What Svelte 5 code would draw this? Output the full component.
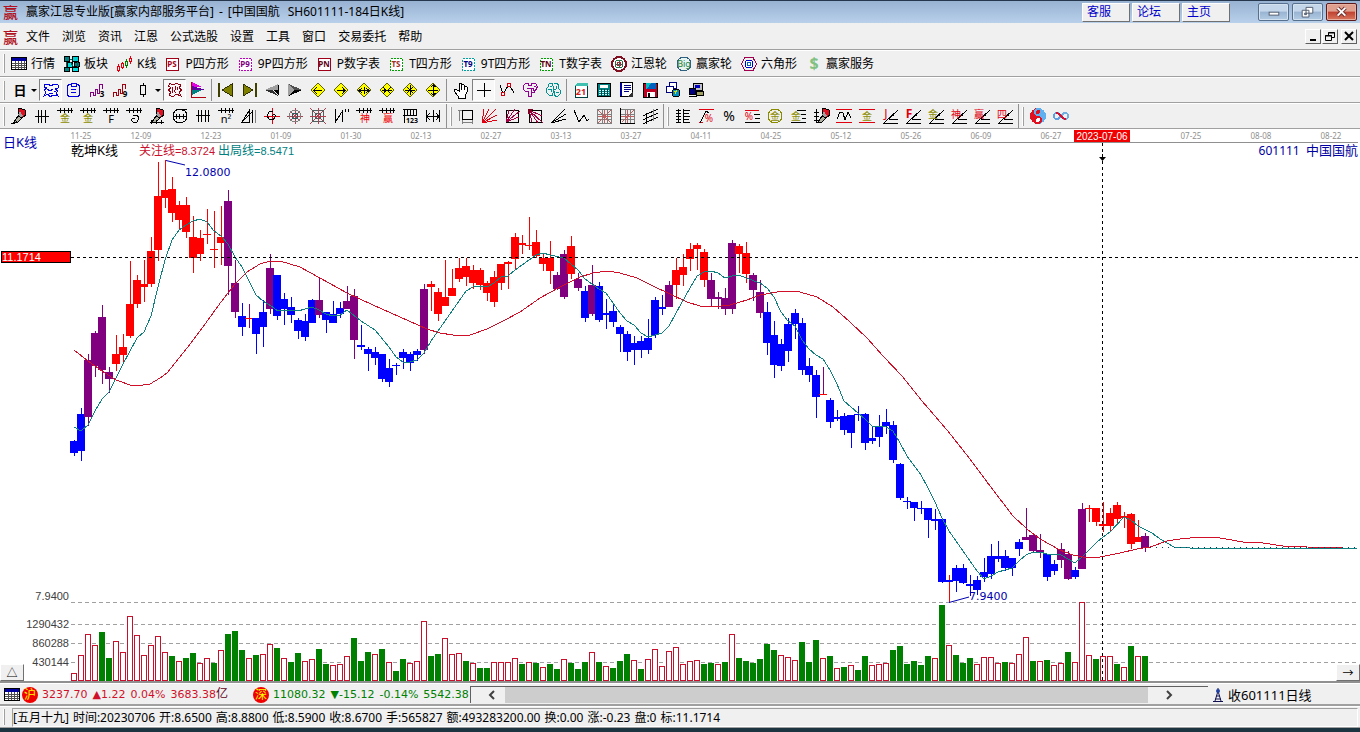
<script lang="ts">
	type Candle = [high: number, top: number, bottom: number, low: number, body: string, wick?: string];
	type Tool = { name: string; art?: string; pressed?: boolean; menu?: boolean; sep?: boolean };

	const RED = '#e00010';
	const GREY = '#808080';
	const OLIVE = '#8c8c00';

	// small helpers for the 18x18 toolbar glyphs
	const line = (d: string, c = '#000', w = 1) =>
		`<path d="${d}" fill="none" stroke="${c}" stroke-width="${w}"/>`;
	const fill = (d: string, c: string, s = 'none') => `<path d="${d}" fill="${c}" stroke="${s}"/>`;
	const word = (s: string, x: number, y: number, size: number, c: string, weight = 400) =>
		`<text x="${x}" y="${y}" font-size="${size}" font-weight="${weight}" fill="${c}" text-anchor="middle">${s}</text>`;
	const ring = (r: number, c: string, w = 1, bg = 'none') =>
		`<circle cx="9" cy="9" r="${r}" fill="${bg}" stroke="${c}" stroke-width="${w}"/>`;

	const comb = line('M1 3.5H17M4.5 1V6M8.5 1V6M12.5 1V6M15.5 1V6');
	const rays = line('M2 16.5H17M8 12.5H17M3 16L17 3M11 8.5H13');
	const fan = line('M2 16L4 2M2 16L9 2M2 16L16 2M2 16L17 8M2 16L17 13', RED);
	const mesh = line('M2.5 2.5H16.5V16.5H2.5ZM7.5 2V17M12.5 2V17M2 7.5H17M2 12.5H17', GREY);
	const pencil =
		fill('M9 1L15 3L16 8L12 11L8 9Z', '#e01020', '#000') +
		fill('M8 9L12 11L8 15L4 15Z', '#b0b0a0', '#000') +
		fill('M10 4L13 9L11 10L8 8Z', '#a0a0a0');
	const badge = (s: string, c: string, ink: string) =>
		`<rect x="2.5" y="3.5" width="12" height="12" fill="#fff" stroke="${c}" stroke-dasharray="${c === '#a00018' ? 'none' : '2 1'}"/>` +
		word(s, 8, 12, 8, ink, 700);
	const diamond = (d: string) =>
		fill('M9 2L16 9L9 16L2 9Z', '#ffff00', '#606000') + line(d, '#000', 1);
	const table =
		'<rect x="1.5" y="2.5" width="15" height="12" fill="#fff" stroke="#000"/><rect x="2" y="3" width="14" height="3" fill="#0000a0"/>' +
		line('M2 8.5H16M2 10.5H16M2 12.5H16M5.5 6V14M8.5 6V14M11.5 6V14M14.5 6V14', '#505050');

	const menus = ['文件', '浏览', '资讯', '江恩', '公式选股', '设置', '工具', '窗口', '交易委托', '帮助'];

	const views: Tool[] = [
		{ name: '行情', art: table },
		{
			name: '板块',
			art:
				'<g stroke="#000"><rect x="1.5" y="1.5" width="5" height="5" fill="#008080"/><rect x="9.5" y="1.5" width="6" height="5" fill="#00d0d0"/><rect x="4.5" y="7.5" width="5" height="5" fill="#00e0e0"/><rect x="11.5" y="7.5" width="5" height="4" fill="#008080"/><rect x="1.5" y="12.5" width="5" height="4" fill="#008080"/><rect x="9.5" y="12.5" width="6" height="4" fill="#00e0e0"/></g>' +
				line('M7 4H9M3.5 7V12M7 7L11 12M14 7V12', '#006060')
		},
		{
			name: 'K线',
			art:
				line('M2.5 9V17M6.5 7V14M14.5 1V9', RED) +
				line('M10.5 4V13', '#008000') +
				'<g fill="#f0f0f0"><rect x="1.5" y="11.5" width="2" height="4" stroke="#e00010"/><rect x="5.5" y="8.5" width="2" height="4" stroke="#e00010"/><rect x="9.5" y="6.5" width="2" height="4" stroke="#008000"/><rect x="13.5" y="3.5" width="2" height="3" stroke="#e00010"/></g>'
		},
		{ name: 'P四方形', art: badge('PS', '#a00018', '#a00018') },
		{ name: '9P四方形', art: badge('P9', '#c000c0', '#800080') },
		{ name: 'P数字表', art: badge('PN', '#a00018', '#600010') },
		{ name: 'T四方形', art: badge('TS', '#00a000', '#a03020') },
		{ name: '9T四方形', art: badge('T9', '#00a0a0', '#000080') },
		{ name: 'T数字表', art: badge('TN', '#00a000', '#600010') },
		{
			name: '江恩轮',
			art: ring(7, '#801020', 2, '#fff') + ring(4, '#207040', 1) + ring(2, '#c02020', 1) + line('M9 5V13M5 9H13', '#555')
		},
		{ name: '赢家轮', art: ring(7, '#306080', 1, '#e8f4f0') + word('Big', 9, 12, 9, '#208040') },
		{
			name: '六角形',
			art: line('M5 2.5H13L16.5 9L13 15.5H5L1.5 9Z', '#a00050', 1) + ring(4, '#0000c0', 1, '#fff') + ring(2, '#0060c0')
		},
		{ name: '赢家服务', art: word('$', 9, 14, 16, '#80c080', 700) }
	];

	const drawBar: Tool[] = [
		{ name: '周期', art: word('日', 10, 14, 13, '#000', 700), menu: true },
		{
			name: '乾坤线',
			pressed: true,
			art: line(
				'M2.5 4L6 3L9 5L12 3L16 4V7L13 8L16 10L14 12L16 15L11 14L8 16L6 13L2 15L4 11L2 9L5 7L2.5 6ZM5 8L8 10L11 8M7 12H11M12 10H14',
				'#0000e0'
			)
		},
		{ name: '剪贴', art: line('M6 3.5H4L2.5 5V14L4 15.5H13L14.5 14V5L13 3.5H11M6 2.5H11V5H6ZM6 8.5H11M6 11.5H11', '#0000e0') },
		{ name: '三线', art: line('M2.5 16V11H5.5V14H7.5V8H9.5V12H11.5V3H14.5V8', '#800080') + word('3', 14, 16, 8, '#000', 700) },
		{ name: '九线', art: line('M2.5 16V11H5.5V14H7.5V8H9.5V12H11.5V3H14.5V8', '#a00010') + word('9', 14, 16, 8, '#000', 700) },
		{ name: 'K线样式', art: line('M6.5 4.5H11.5V13.5H6.5ZM9 2V4M9 14V16'), menu: true },
		{
			name: '形态',
			pressed: true,
			art: line(
				'M4 2.5L7 4L10 2.5L15 4L13 7L16 9L13 11L15 15L10 13L7 16L3 14L5 11L2 9L5 7L2.5 5ZM7 6L6 12M9 5L10 8L8 10L10 12M12 6L11 9',
				'#900010'
			)
		},
		{
			name: '分布',
			art: fill('M3 1L13 6H3Z', '#e000e0') + fill('M3 5L17 9L3 10Z', '#6000a0') + fill('M3 9H13L3 14Z', '#008080') + line('M2.5 1V16.5H17', '#b00010')
		},
		{ name: '', sep: true },
		{ name: '最前', art: line('M2 2V16', '#404000', 2) + fill('M15 3V15L5 9Z', '#808000', '#303000') },
		{ name: '最后', art: line('M16 2V16', '#404000', 2) + fill('M3 3V15L13 9Z', '#808000', '#303000') },
		{ name: '前移', art: fill('M16 3V15L10 9Z', '#000') + fill('M15 3V9H2Z', '#a0a0a0') + fill('M2 9H10L15 15Z', '#303030') },
		{ name: '后移', art: fill('M2 3V15L8 9Z', '#a0a0a0') + fill('M3 3L16 9H8Z', '#505050') + fill('M3 15L8 9H16Z', '#000') },
		{ name: '左', art: diamond('M5 9.5H13M8 6L5 9.5L8 13') },
		{ name: '右', art: diamond('M5 9.5H13M10 6L13 9.5L10 13') },
		{ name: '左右', art: diamond('M4 9.5H14M7 7L4 9.5L7 12M11 7L14 9.5L11 12M9.5 6V13') },
		{ name: '收缩', art: diamond('M4 9.5H14M5 6L8 9.5L5 13M13 6L10 9.5L13 13') },
		{ name: '米字', art: diamond('M4 9.5H14M9.5 4V14M6 6L12 12M12 6L6 12') },
		{ name: '上下', art: diamond('M9.5 3V15M7 6L9 4L12 6M7 12L9 14L12 12M4 9.5H14') },
		{ name: '', sep: true },
		{
			name: '拖动',
			art: fill('M5 9L3 8L2 10L6 15V17H13V15L15 11V6L13 5L12 7V4L10 3L9 7V2H7V10Z', '#fff', '#000') + line('M9.5 4V9M12.5 6V9')
		},
		{ name: '十字', pressed: true, art: line('M9.5 2V16M2 9.5H16') },
		{
			name: '拐点',
			art: line('M2 4L5 13L10 5L12 5L16 12') + '<g fill="#f0f0f0" stroke="#d00010"><circle cx="5" cy="13" r="2"/><circle cx="11" cy="4" r="2"/></g>'
		},
		{
			name: '锦囊',
			art: line('M4.5 2.5H7.5V4.5H10.5V2.5H14.5L16.5 5.5L14.5 9.5H12.5V7.5H10.5V15.5H7.5V10.5H4.5L2.5 8.5V4.5ZM5.5 7.5H9.5M12.5 5.5H14.5M9.5 11.5H13.5V8.5', '#900090')
		},
		{
			name: '大脑',
			art: line('M8 2L5 3L4 6L2 8L3 12L5 14L8 15L9 12V5ZM10 3L13 2L15 5L14 7L16 9V13L13 16L10 14V10M4 8H7V11M12 5V8L10 9M12 11H15M6 5H8', '#009090')
		},
		{ name: '', sep: true },
		{
			name: '日历',
			art: '<rect x="3.5" y="4.5" width="12" height="12" fill="#fff" stroke="#004040"/><path d="M3 5L5 2H16V5Z" fill="#40c0b0"/>' + word('21', 9, 14, 9, '#d02020', 700)
		},
		{
			name: '计算器',
			art: '<rect x="2.5" y="2.5" width="13" height="13" fill="#008080" stroke="#000"/><rect x="5" y="4" width="8" height="3" fill="#fff"/>' + line('M4 9.5H14M4 11.5H14M4 13.5H14', '#c0ffff') + line('M6.5 8V15M9.5 8V15M12.5 8V15', '#004040')
		},
		{
			name: '记事',
			art: '<rect x="2.5" y="1.5" width="12" height="14" fill="#fff" stroke="#000"/>' + line('M3 2V15', '#0000a0', 2) + line('M6 4.5H13M6 6.5H13M6 8.5H13M6 10.5H11', '#000080') + fill('M15 11V16H9Z', '#303030')
		},
		{
			name: '保存',
			art: fill('M2 2H16V16H2Z', '#c00020', '#000') + fill('M5 2H15V8H5Z', '#0060c0') + fill('M5 2H10L6 8H5Z', '#00c0c0') + fill('M6 11H14V16H6Z', '#fff') + fill('M7 12H9V16H7Z', '#000')
		},
		{
			name: '网络',
			art: '<rect x="5.5" y="1.5" width="7" height="6" fill="#fff" stroke="#000080"/><rect x="2.5" y="5.5" width="7" height="6" fill="#fff" stroke="#000080"/><circle cx="12" cy="12" r="4" fill="#0090c0" stroke="#000"/>' + fill('M10 10L13 9L12 14Z', '#e0e000')
		},
		{
			name: '传输',
			art: fill('M6 2H15V9H6Z', '#c0c0c0', '#000') + fill('M8 4H13V7H8Z', '#0000c0') + fill('M2 7H8V13H2Z', '#000080', '#000') + fill('M9 10H16V14H9Z', '#a0a060', '#000') + line('M2 15.5H10')
		}
	];

	const gold = (y: number) => word('金', 9, y, 10, OLIVE);
	const gannBars: Tool[][] = [
		[
			{ name: '画笔', art: pencil + line('M1 16H5L7 14') },
			{ name: '等分', art: line('M2 9.5H16M5.5 3V16M8.5 3V16M12.5 3V16') },
			{ name: '黄金一', art: comb + gold(15) },
			{ name: '黄金二', art: comb + gold(15) },
			{ name: '斐波', art: comb + word('F', 9, 16, 11, '#000') },
			{ name: '螺旋', art: comb + line('M8 8H12L14 11L12 15H8L6 13L8 11H10') },
			{ name: '标尺笔', art: pencil + line('M2 15.5H16M3.5 13V17M8.5 13V17M13.5 13V17') },
			{ name: '圆规', art: ring(7, '#000') + line('M2 9.5H16M5.5 7V12M8.5 7V12M12.5 7V12M11 4L16 2') },
			{ name: '平行', art: line('M2 8.5H16M4.5 3V15M7.5 3V15M11.5 3V15M14.5 3V15') },
			{ name: '平方', art: comb + word('n²', 9, 16, 11, '#000') },
			{ name: '三角尺', art: line('M2 15L9.5 3V15ZM2 15L13 4M12.5 3V16') + line('M15.5 3V16', GREY) },
			{ name: '旋轮', art: line('M9.5 1V17M1 9.5H17', RED) + line('M9 9L11 7L13 9L10 13L6 12L4 9L6 5L10 4') },
			{ name: '蛛网圆', art: line('M9.5 1V17M1 9.5H17M4 4L14 14M14 4L4 14', '#b04050') + ring(3, '#306060') + ring(6, GREY) },
			{ name: '蛛网方', art: line('M1 1L17 17M17 1L1 17', '#b04050') + line('M3.5 3.5H14.5V14.5H3.5ZM6.5 6.5H11.5V11.5H6.5Z', '#506060') + line('M9.5 1V17M1 9.5H17', '#b04050') },
			{ name: '波段', art: line('M3.5 2V15L10.5 4V15M13.5 2V5M16.5 2V5') },
			{ name: '神线', art: comb + word('神', 10, 15, 10, '#f00000') },
			{ name: '赢线', art: comb + word('赢', 10, 15, 10, '#f00000') },
			{ name: '刻度', art: line('M2 2.5H16M2 8.5H16M3.5 2V16M15.5 2V9M6.5 3V8M9.5 3V8M12.5 3V8') + word('123', 11, 16, 7, '#000', 700) },
			{ name: '宽度', art: line('M2.5 3V15M15.5 3V15M9.5 3V15M3 9.5H15M6 6L3 9.5L6 13M12 6L15 9.5L12 13') }
		],
		[
			{ name: '矩形', art: line('M5.5 3.5H15.5V12.5H5.5Z') + line('M1 3.5H5M2.5 3V14M5 15.5H16M5.5 13V17M15.5 13V17', GREY) },
			{ name: '扇形', art: fan },
			{ name: '方扇', art: line('M3.5 3.5H15.5V15.5H3.5Z') + line('M3 15L6 3M3 15L12 2M3 15L17 4M3 15L16 10', '#a00040') },
			{ name: '反扇', art: line('M3.5 3.5H15.5V15.5H3.5Z') + line('M3 3L6 15M3 3L12 16M3 3L17 16M3 3L16 9', '#a00040') + fill('M2 2H7L2 7Z', '#800020') },
			{ name: '射线', art: line('M2 16L16 2M2 16L17 7M2 16L17 12') },
			{ name: '折线', art: line('M2 3L7 15L12 8L15 14L17 12') },
			{ name: '方格', art: mesh + line('M3 3L16 16M16 3L3 16M9.5 3V16M3 9.5H16', '#c06060') },
			{ name: '方格尺', art: mesh + line('M4 15L16 3M9.5 3V16M3 9.5H16', '#c06060') + line('M2.5 1V16.5H17') },
			{ name: '通道', art: line('M2 9L17 2M2 13L17 6M2 17L17 10M5.5 6V17') + line('M12.5 2V14', GREY) }
		],
		[
			{ name: '价格表', art: line('M4.5 2V16M9.5 2V16M2 3.5H7M2 6.5H7M2 9.5H7M2 12.5H7M2 15.5H7M9 3.5H16M9 6.5H15M9 9.5H16M9 12.5H15M9 15.5H16') },
			{ name: '百分比', art: line('M2 2.5H17M2 15.5H6', RED) + line('M3 16L9 4L12 6') + word('%', 12, 15, 10, RED) },
			{ name: '比例', art: word('%', 9, 14, 14, '#000') },
			{ name: '比例线', art: line('M2 3.5H16', RED) + line('M11 7.5H17M12 11.5H17M2 15.5H17') + word('%', 6, 13, 10, RED) },
			{ name: '金圆', art: ring(7, OLIVE) + gold(13) },
			{ name: '金线', art: line('M8 3.5H17M12 7.5H17M13 11.5H17M2 15.5H17') + word('金', 7, 13, 10, OLIVE) },
			{ name: '标注', art: line('M4.5 2V16M2 5.5H7M2 9.5H7M2 13.5H7') + '<g transform="translate(2 0)">' + pencil + '</g>' },
			{ name: '正弦', art: line('M1 2.5H17M1 15.5H17', RED) + line('M2 12L5 5L8 6L10 13L13 5L16 11') },
			{ name: '金轨', art: line('M1 2.5H17M1 15.5H17', RED) + gold(13) },
			{ name: 'J线', art: rays + word('J', 5, 11, 12, RED) },
			{ name: 'F线', art: rays + word('F', 5, 11, 12, RED, 700) },
			{ name: '金角', art: rays + word('金', 6, 11, 10, OLIVE) },
			{ name: '神角', art: rays + word('神', 6, 11, 10, RED) },
			{ name: '赢角', art: rays + word('赢', 6, 11, 10, RED) },
			{ name: '四角', art: rays + word('四', 6, 11, 10, RED) }
		],
		[
			{
				name: '太极',
				art: '<circle cx="9" cy="9" r="8" fill="#60b0f0"/>' + fill('M9 1A8 8 0 0 0 9 17A4 4 0 0 0 9 9A4 4 0 0 1 9 1Z', '#e01020') + '<circle cx="9" cy="5" r="2" fill="#e01020"/><circle cx="9" cy="13" r="2" fill="#fff"/>'
			},
			{
				name: '循环',
				art: line('M9 9C7 5 2 5 2 9S7 13 9 9', '#60a0e0', 2) + line('M9 9C11 5 16 5 16 9S11 13 9 9', '#70b0e0', 2) + line('M4 6C8 5 10 13 14 12', '#d01030', 2)
			}
		]
	];

	const INK: Record<string, string> = { r: '#ff0000', p: '#800080', b: '#0000ff' };

	const candles: Candle[] = [
		[440, 441, 453, 456, 'b'], [408, 414, 451, 461, 'b'], [354, 360, 417, 426, 'p'], [331, 333, 366, 377, 'p'],
		[305, 317, 370, 384, 'p'], [367, 372, 379, 393, 'p'], [335, 354, 364, 371, 'r'], [334, 347, 355, 363, 'r'],
		[261, 304, 336, 338, 'r'], [275, 280, 304, 308, 'r'], [260, 284, 287, 302, 'r'], [237, 251, 284, 287, 'r'],
		[162, 196, 250, 261, 'r'], [160, 190, 198, 208, 'r'], [177, 189, 213, 222, 'r'], [201, 205, 220, 229, 'r'],
		[197, 205, 232, 238, 'r'], [216, 237, 258, 273, 'r'], [230, 238, 254, 261, 'r'], [209, 234, 235, 244, 'r'],
		[211, 249, 250, 268, 'r'], [206, 237, 243, 265, 'r'], [190, 201, 266, 295, 'p'], [260, 283, 312, 318, 'p'],
		[303, 316, 327, 336, 'b'], [304, 318, 319, 328, 'r', 'p'], [318, 318, 334, 354, 'b'], [300, 312, 327, 347, 'b'],
		[254, 268, 309, 314, 'p'], [275, 275, 316, 320, 'b'], [293, 299, 309, 325, 'b'], [297, 307, 315, 323, 'b'],
		[318, 320, 331, 339, 'b'], [314, 321, 337, 341, 'b'], [299, 300, 323, 323, 'b'], [277, 300, 315, 318, 'p'],
		[312, 312, 320, 333, 'b'], [301, 314, 323, 323, 'b'], [302, 308, 314, 318, 'b'], [286, 301, 309, 309, 'p'],
		[289, 296, 340, 359, 'p'], [325, 345, 347, 350, 'b'], [347, 349, 354, 371, 'b'], [347, 352, 358, 365, 'b'],
		[354, 354, 379, 382, 'b'], [359, 368, 382, 387, 'b'], [363, 365, 366, 375, 'b'], [349, 352, 358, 369, 'b'],
		[352, 354, 363, 371, 'b'], [349, 351, 355, 361, 'b'], [284, 289, 350, 354, 'p'], [281, 284, 287, 311, 'r'],
		[288, 292, 314, 321, 'r'], [260, 297, 306, 306, 'r'], [269, 288, 296, 296, 'r'], [258, 268, 279, 282, 'r'],
		[258, 266, 277, 286, 'r'], [265, 270, 283, 289, 'r'], [268, 270, 285, 290, 'r'], [281, 283, 293, 301, 'r'],
		[271, 277, 302, 307, 'r'], [264, 264, 283, 290, 'r'], [261, 262, 264, 289, 'r'], [233, 237, 259, 269, 'r'],
		[235, 243, 245, 254, 'r'], [217, 245, 246, 250, 'r'], [230, 242, 256, 258, 'r'], [253, 258, 264, 271, 'r'],
		[241, 258, 271, 284, 'r'], [272, 275, 289, 290, 'p'], [250, 254, 297, 299, 'p'], [236, 246, 274, 279, 'r'],
		[273, 279, 288, 291, 'p'], [286, 291, 318, 322, 'b'], [265, 285, 314, 316, 'p'], [282, 286, 320, 322, 'b'],
		[299, 313, 315, 329, 'b'], [303, 311, 322, 327, 'b'], [325, 327, 334, 352, 'b'], [331, 334, 352, 361, 'b'],
		[336, 343, 350, 365, 'b'], [336, 341, 350, 358, 'b'], [319, 338, 350, 354, 'b'], [297, 300, 335, 338, 'b'],
		[295, 307, 309, 315, 'b'], [281, 285, 307, 307, 'p'], [258, 270, 285, 299, 'r'], [254, 267, 275, 286, 'r'],
		[243, 249, 259, 271, 'r'], [243, 245, 249, 270, 'r'], [249, 252, 280, 287, 'r'], [273, 280, 299, 307, 'p'],
		[292, 297, 299, 309, 'p'], [288, 298, 309, 315, 'p'], [240, 243, 309, 314, 'p'], [244, 246, 254, 273, 'r'],
		[242, 253, 274, 283, 'r'], [273, 275, 290, 301, 'p'], [280, 292, 313, 318, 'p'], [302, 312, 343, 355, 'b'],
		[321, 335, 365, 378, 'b'], [339, 344, 366, 371, 'b'], [318, 324, 351, 362, 'b'], [309, 313, 324, 339, 'b'],
		[318, 323, 370, 375, 'b'], [358, 366, 375, 382, 'b'], [370, 375, 397, 418, 'b'], [367, 394, 395, 395, 'r', 'p'],
		[398, 400, 422, 428, 'b'], [410, 417, 419, 421, 'b'], [413, 416, 430, 435, 'b'], [415, 415, 433, 448, 'b'],
		[406, 414, 415, 421, 'b'], [413, 414, 443, 450, 'b'], [426, 438, 441, 444, 'b'], [415, 427, 437, 447, 'b'],
		[409, 422, 426, 434, 'b'], [421, 425, 460, 463, 'b'], [463, 464, 498, 500, 'b'], [497, 501, 502, 509, 'b'],
		[502, 502, 508, 521, 'b'], [501, 508, 509, 514, 'b'], [508, 508, 520, 538, 'b'], [509, 519, 521, 530, 'b'],
		[519, 519, 582, 583, 'b'], [575, 580, 582, 602, 'b', 'r'], [565, 568, 581, 592, 'b'], [564, 568, 583, 584, 'b'],
		[575, 584, 586, 596, 'b'], [576, 580, 590, 595, 'b'], [558, 572, 577, 582, 'b'], [544, 556, 574, 579, 'b'],
		[541, 556, 559, 562, 'b'], [550, 556, 568, 571, 'b'], [558, 558, 568, 576, 'b'], [539, 542, 549, 556, 'b'],
		[508, 537, 540, 540, 'p'], [533, 535, 551, 553, 'p'], [534, 550, 553, 558, 'p'], [554, 554, 577, 581, 'b'],
		[560, 564, 571, 575, 'b'], [543, 549, 560, 568, 'p'], [551, 554, 579, 580, 'p'], [567, 570, 577, 579, 'b'],
		[503, 509, 569, 569, 'p'], [505, 508, 509, 522, 'r'], [508, 508, 522, 526, 'r'], [502, 524, 526, 532, 'r'],
		[508, 513, 526, 532, 'r'], [502, 505, 519, 523, 'r'], [512, 516, 518, 528, 'r'], [513, 514, 544, 549, 'r'],
		[520, 537, 542, 542, 'r'], [533, 536, 548, 552, 'p']
	];

	// r = rising (hollow), g = falling (solid), number = top of the bar
	const volumes = (
		'r673 r655 r634 r645 g632 g658 r641 r652 r616 r635 r655 r645 r636 r652 g656 r661 g658 g653 r663 r658 ' +
		'g663 r650 g634 g631 g650 r658 g655 r654 r644 g648 r658 g662 g653 r661 r659 g649 g664 r665 r664 r656 ' +
		'g638 g661 g652 r654 g649 r662 g671 g659 r663 r661 r621 g656 g654 r638 r654 r653 g661 r663 g668 g668 ' +
		'r662 r662 r662 r658 g664 r662 g663 r667 g664 g669 r659 g663 g669 g662 r652 g662 r666 g668 g661 g654 ' +
		'r660 g669 r659 r649 r666 r651 r647 r664 r661 r660 g664 g663 r664 g662 r634 g658 g661 g663 g659 g644 ' +
		'g650 r655 r657 r660 g642 g662 g640 r658 g656 r668 g667 r665 g670 g656 r665 r664 r663 g650 g646 g664 ' +
		'g661 g665 g656 r658 g605 r645 g655 g663 g658 r664 r657 r657 r663 g662 r663 r654 r637 g661 r661 g660 ' +
		'r665 r663 g652 r662 r602 r655 g659 r656 r656 g664 r667 g646 r656 g656'
	)
		.split(' ')
		.map((v) => ({ up: v[0] === 'r', top: Number(v.slice(1)) }));

	const shortLine =
		'74,427 81,431 88,425 95,411 102,399 109,392 116,378 123,364 130,351 137,338 144,332 151,316 158,287 165,260 172,240 179,230 186,225 193,221 200,219 207,222 214,231 221,236 228,244 235,257 242,267 249,281 256,295 263,301 271,306 278,311 287,310 298,311 305,309 312,307 319,310 326,314 333,316 340,315 347,310 361,321 375,330 389,347 396,357 403,362 410,362 417,360 424,353 431,341 445,321 459,301 466,291 473,287 480,286 487,287 494,283 501,277 508,276 515,270 529,260 536,255 543,253 550,255 564,258 571,264 578,270 585,279 592,284 599,289 606,293 613,303 620,313 627,321 634,325 641,333 648,337 655,335 662,333 669,326 676,313 690,288 697,276 704,272 711,271 718,273 725,278 732,276 739,275 746,278 760,283 767,288 774,297 781,312 788,321 795,326 802,340 809,349 816,355 823,359 830,370 837,384 844,401 858,413 865,419 872,426 886,427 893,431 900,443 907,456 921,475 928,488 935,502 942,518 949,531 963,551 977,571 984,579 991,576 998,572 1012,568 1019,561 1026,555 1033,552 1040,552 1047,554 1061,555 1068,559 1075,563 1082,557 1096,543 1103,537 1110,532 1124,517 1131,520 1138,526 1152,533 1160,539 1174,547 1190,548 1357,548';
	const longLine =
		'74,350 88,361 102,371 116,380 130,385 137,386 150,384 160,378 167,373 187,348 200,331 221,302 235,284 247,272 260,264 270,261 280,261 300,267 320,278 347,293 373,305 400,317 427,329 440,333 453,335 470,335 487,329 503,321 520,312 540,298 560,287 580,277 593,273 607,271 620,273 637,278 653,286 670,294 687,302 700,306 713,307 730,305 747,300 760,295 777,292 787,291 800,292 817,297 833,307 850,322 867,338 883,356 902,376 922,401 947,430 970,459 987,482 1000,499 1013,516 1027,529 1040,539 1060,550 1073,555 1083,557 1100,557 1120,553 1137,549 1150,547 1167,541 1180,539 1200,537 1220,538 1243,542 1263,543 1283,546 1307,547 1343,548';

	const dates = [
		'12-09', '12-23', '01-09', '01-30', '02-13', '02-27', '03-13', '03-27', '04-11',
		'04-25', '05-12', '05-26', '06-09', '06-27', '', '07-25', '08-08', '08-22'
	];
	const levels = [
		{ y: 602, label: '7.9400', at: 600 },
		{ y: 624, label: '1290432', at: 628 },
		{ y: 643, label: '860288', at: 647 },
		{ y: 662, label: '430144', at: 666 }
	];
	const px = (i: number) => 74 + i * 7;

	const indexes = [
		{ market: '沪', up: true, parts: ['3237.70', '▲1.22', '0.04%', '3683.38'], unit: '亿' },
		{ market: '深', up: false, parts: ['11080.32', '▼-15.12', '-0.14%', '5542.38'], unit: '' }
	];
	const fields = [
		'[五月十九]', '时间:20230706', '开:8.6500', '高:8.8800', '低:8.5900', '收:8.6700', '手:565827',
		'额:493283200.00', '换:0.00', '涨:-0.23', '盘:0', '标:11.1714'
	];
</script>

{#snippet glyph(art: string)}
	<svg class="glyph" viewBox="0 0 18 18" aria-hidden="true">{@html art}</svg>
{/snippet}

{#snippet tool(item: Tool)}
	{#if item.sep}
		<span class="sep"></span>
	{:else}
		<button class="tool" class:pressed={item.pressed} class:has-menu={item.menu} aria-label={item.name}>
			{@render glyph(item.art ?? '')}
			{#if item.menu}<span class="caret"></span>{/if}
		</button>
	{/if}
{/snippet}

<div class="window">
	<header class="titlebar">
		<span class="logo">赢</span>
		<h1>
			<span>赢家江恩专业版[赢家内部服务平台]</span>
			<span>-</span>
			<span>[中国国航</span>
			<span class="code">SH601111-184日K线]</span>
		</h1>
		<nav class="links">
			<button>客服</button>
			<button>论坛</button>
			<button>主页</button>
		</nav>
		<div class="frame-buttons">
			<button aria-label="最小化">
				<svg viewBox="0 0 30 17"><rect x="10.5" y="8.5" width="10" height="3" fill="#fff" stroke="#555e70" /></svg>
			</button>
			<button aria-label="还原">
				<svg viewBox="0 0 30 17">
					<path d="M13.5 3.5H20.5V9.5H13.5ZM9.5 6.5H16.5V13.5H9.5Z" fill="#fff" stroke="#555e70" />
					<path d="M12 9.5H14V11H12Z" fill="#7890b0" stroke="#555e70" />
				</svg>
			</button>
			<button class="close" aria-label="关闭">
				<svg viewBox="0 0 30 17">
					<path d="M11 4L19 12M19 4L11 12" stroke="#703030" stroke-width="4" />
					<path d="M11 4L19 12M19 4L11 12" stroke="#fff" stroke-width="2" />
				</svg>
			</button>
		</div>
	</header>

	<div class="menubar">
		<span class="logo">赢</span>
		<nav class="menus">
			{#each menus as item}
				<button>{item}</button>
			{/each}
		</nav>
		<div class="child-buttons">
			<button aria-label="最小化子窗口"><svg viewBox="0 0 14 13"><path d="M4 10H10" stroke="#000" stroke-width="2" /></svg></button>
			<button aria-label="还原子窗口">
				<svg viewBox="0 0 14 13"><path d="M5.5 5V2.5H11.5V7.5H9M5 3H12M2.5 5.5H8.5V10.5H2.5ZM2 6H9" fill="none" stroke="#000" /></svg>
			</button>
			<button class="last" aria-label="关闭子窗口">
				<svg viewBox="0 0 14 13"><path d="M3 2L11 10M11 2L3 10" stroke="#000" stroke-width="2" /></svg>
			</button>
		</div>
	</div>

	<div class="toolbar views" role="toolbar" aria-label="视图">
		<span class="grip"></span>
		{#each views as item}
			<button class="view">{@render glyph(item.art ?? '')}<span>{item.name}</span></button>
		{/each}
	</div>

	<div class="toolbar" role="toolbar" aria-label="图表">
		<span class="grip"></span>
		{#each drawBar as item}
			{@render tool(item)}
		{/each}
	</div>

	<div class="toolbar" role="toolbar" aria-label="画线">
		{#each gannBars as group}
			<div class="group">
				<span class="grip"></span>
				{#each group as item}
					{@render tool(item)}
				{/each}
			</div>
		{/each}
	</div>

	<main class="chart">
		<svg class="plot" viewBox="0 130 1360 551" role="img" aria-label="中国国航 日K线">
			<line x1="71" x2="1358" y1="142.5" y2="142.5" stroke="#909090" />
			<g class="dates">
				<text x="81" y="139">11-25</text>
				{#each dates as date, i}
					<text x={141 + i * 70} y="139">{date}</text>
				{/each}
			</g>

			{#each levels as level}
				<line class="grid" x1="71" x2="1358" y1={level.y + 0.5} y2={level.y + 0.5} />
				<text class="level" x="69" y={level.at}>{level.label}</text>
			{/each}

			{#each volumes as v, i}
				{#if v.up}
					<rect x={px(i) - 2.5} y={v.top + 0.5} width="5" height={680 - v.top} fill="#fff" stroke="#c8102c" />
				{:else}
					<rect x={px(i) - 3} y={v.top} width="6" height={681 - v.top} fill="#008000" />
				{/if}
			{/each}

			{#each candles as [high, top, bottom, low, body, wick], i}
				<rect x={px(i)} y={high} width="1" height={low - high} fill={INK[wick ?? body]} />
				<rect x={px(i) - 4} y={top} width="8" height={bottom - top} fill={INK[body]} />
			{/each}

			<polyline class="average" points={shortLine} stroke="#108080" />
			<polyline class="average" points={longLine} stroke="#d01028" />
			<line x1="1150" x2="1358" y1="547.5" y2="547.5" stroke="#004060" stroke-dasharray="1 5" />

			<line class="cursor" x1="71" x2="1358" y1="257.5" y2="257.5" />
			<line class="cursor" x1="1102.5" x2="1102.5" y1="143" y2="681" />
			<path d="M1099 157H1106L1102.5 161Z" />
			<path d="M1102.5 154V158" stroke="#000" />

			<rect x="1.5" y="251.5" width="69" height="11" fill="#f00" stroke="#000" />
			<text class="price-tag" x="2" y="261">11.1714</text>
			<rect x="1074" y="130" width="56" height="12" fill="#f00000" />
			<text class="date-tag" x="1102" y="140">2023-07-06</text>

			<text class="heading" x="3" y="147" fill="#0000b0">日K线</text>
			<text class="heading" x="71" y="155" fill="#000">乾坤K线</text>
			<text class="legend" x="139" y="155" fill="#c8102c">关注线<tspan class="value">=8.3724</tspan></text>
			<text class="legend" x="218" y="155" fill="#008080">出局线<tspan class="value">=8.5471</tspan></text>
			<text class="stock" x="1358" y="155">601111&nbsp; <tspan class="stock-name">中国国航</tspan></text>

			<path d="M166 160.5L185 165M949 602.5L969 597" fill="none" stroke="#0000b0" />
			<text class="extreme" x="185" y="176">12.0800</text>
			<text class="extreme" x="969" y="600">7.9400</text>
		</svg>
		<button class="corner left" aria-label="展开">△</button>
		<button class="corner right" aria-label="右移">→</button>
	</main>

	<div class="ticker">
		<div class="quotes">
			{@render glyph(table)}
			{#each indexes as index}
				<span class="market">{index.market}</span>
				<span class="quote" class:up={index.up}>
					{#each index.parts as part, i}
						<span>{part}{#if i === 3 && index.unit}<span class="unit">{index.unit}</span>{/if}</span>
					{/each}
				</span>
			{/each}
		</div>
		<div class="scrollbar">
			<button aria-label="向左滚动"><svg viewBox="0 0 10 10"><path d="M7 1L3 5L7 9" /></svg></button>
			<div class="thumb"></div>
			<button class="next" aria-label="向右滚动"><svg viewBox="0 0 10 10"><path d="M3 1L7 5L3 9" /></svg></button>
		</div>
		<div class="receive">
			<svg viewBox="0 0 12 16" aria-hidden="true">
				<path d="M6 1V4M6 4L3 14M6 4L9 14M4 9H8M3 12H9M1 14.5H11" fill="none" stroke="#101050" />
				<circle cx="6" cy="4" r="2" fill="#2040a0" />
			</svg>
			<span>收601111日线</span>
		</div>
	</div>

	<footer class="status">
		<span class="grip"></span>
		<p>
			{#each fields as field}
				<span>{field}</span>
			{/each}
		</p>
	</footer>
</div>

<style>
	:global(body) {
		background: #1c3440;
	}
	.window {
		background: #f0f0f0;
		color: #000;
		font: 12px/16px 'Noto Sans', 'Noto Sans CJK SC', sans-serif;
	}
	button {
		box-sizing: border-box;
		padding: 0;
		border: 0;
		background: none;
		color: inherit;
		font: inherit;
	}
	svg {
		display: block;
	}

	.titlebar {
		display: flex;
		align-items: center;
		height: 23px;
		box-sizing: border-box;
		border-top: 1px solid #26364c;
		background: linear-gradient(#98b2d2, #b8d0ea);
	}
	.logo {
		width: 16px;
		margin: 0 7px 0 3px;
		color: #b01020;
		font-size: 15px;
		font-weight: 500;
		line-height: 20px;
	}
	h1 {
		display: flex;
		flex: 1;
		gap: 5px;
		margin: 0;
		font: inherit;
		white-space: nowrap;
	}
	.code {
		margin-left: 3px;
	}
	.links {
		display: flex;
		gap: 2px;
	}
	.links button {
		width: 48px;
		height: 19px;
		padding-left: 4px;
		border: 1px solid;
		border-color: #fff #707070 #707070 #fff;
		background: #f0f0f0;
		color: #0000c8;
		text-align: left;
	}
	.frame-buttons {
		display: flex;
		gap: 3px;
		margin: 0 3px 0 28px;
	}
	.frame-buttons button {
		width: 31px;
		height: 18px;
		border: 1px solid #56708e;
		border-radius: 2px;
		background: linear-gradient(#c4d6ea 45%, #98b4d2 50%, #b4cce4);
		box-shadow: inset 0 0 0 1px #d4e2f0;
	}
	.frame-buttons .close {
		border-color: #5c1a1a;
		background: linear-gradient(#e0a090 45%, #c04030 50%, #d87860);
		box-shadow: inset 0 0 0 1px #e8b0a0;
	}

	.menubar {
		display: flex;
		align-items: center;
		height: 27px;
		box-sizing: border-box;
		padding-top: 1px;
		border-bottom: 1px solid #a0a0a0;
	}
	.menus {
		display: flex;
		flex: 1;
		gap: 12px;
	}
	.child-buttons {
		display: flex;
		gap: 1px;
		margin-right: 3px;
	}
	.child-buttons button {
		width: 16px;
		height: 15px;
		border: 1px solid;
		border-color: #fff #606060 #606060 #fff;
	}
	.child-buttons .last {
		margin-left: 2px;
	}

	.toolbar {
		display: flex;
		align-items: center;
		height: 26px;
		box-sizing: border-box;
		border-top: 1px solid #fff;
		border-bottom: 1px solid #a0a0a0;
	}
	.toolbar.views {
		height: 27px;
	}
	.grip {
		flex: none;
		width: 1px;
		height: 19px;
		margin: 0 2px 0 3px;
		border-right: 1px solid #a0a0a0;
		background: #fff;
	}
	.glyph {
		flex: none;
		width: 18px;
		height: 18px;
		overflow: visible;
		shape-rendering: crispEdges;
	}
	.view {
		display: flex;
		align-items: center;
		flex: none;
		gap: 3px;
		padding: 0 5px 0 3px;
		white-space: nowrap;
	}
	.tool {
		display: flex;
		align-items: center;
		justify-content: center;
		flex: none;
		width: 23px;
		height: 22px;
		border: 1px solid transparent;
	}
	.tool.pressed {
		border-color: #808080 #fff #fff #808080;
		background: #f8f8f8;
	}
	.tool.has-menu {
		width: 32px;
		gap: 3px;
	}
	.caret {
		border: 3px solid transparent;
		border-top-color: #000;
		border-bottom: 0;
	}
	.sep {
		flex: none;
		width: 1px;
		height: 22px;
		margin: 0 2px;
		background: #909090;
	}
	.group {
		display: flex;
		align-items: center;
		height: 24px;
		padding-right: 2px;
		border-right: 1px solid #909090;
	}
	.group:last-child {
		border-right: 0;
	}

	.chart {
		position: relative;
		padding-top: 1px;
		background: #fff;
		border-bottom: 2px solid #909090;
	}
	.plot {
		width: 100%;
		height: auto;
	}
	.dates text {
		fill: #909090;
		font-size: 8px;
		text-anchor: middle;
	}
	.grid {
		stroke: #a0a0a0;
		stroke-dasharray: 4 3;
	}
	.average {
		fill: none;
		shape-rendering: crispEdges;
	}
	.cursor {
		stroke: #000;
		stroke-dasharray: 3 3;
	}
	.level {
		fill: #404040;
		font: 11px 'Liberation Sans', sans-serif;
		text-anchor: end;
	}
	.price-tag {
		fill: #fff;
		font: 11px 'Liberation Sans', sans-serif;
	}
	.date-tag {
		fill: #fff;
		font: 10px 'Liberation Sans', sans-serif;
		text-anchor: middle;
	}
	.heading {
		font-size: 13px;
	}
	.legend {
		font-size: 12px;
	}
	.value {
		font: 11px 'Liberation Sans', sans-serif;
	}
	.stock {
		fill: #0000a0;
		font-size: 12px;
		text-anchor: end;
	}
	.stock-name {
		font-size: 13px;
	}
	.extreme {
		fill: #0000b0;
		font: 11px 'DejaVu Sans', sans-serif;
	}
	.corner {
		position: absolute;
		bottom: 0;
		width: 24px;
		height: 17px;
		border: 1px solid;
		border-color: #fff #707070 #707070 #fff;
		background: #f0f0f0;
		font-size: 11px;
		line-height: 14px;
	}
	.left {
		left: 0;
	}
	.right {
		right: 0;
	}

	.ticker {
		display: flex;
		align-items: center;
		height: 23px;
		box-sizing: border-box;
		padding-top: 1px;
		border-top: 1px solid #fff;
		border-bottom: 2px solid #a0a0a0;
	}
	.quotes {
		display: flex;
		align-items: center;
		flex: 0 0 470px;
		box-sizing: border-box;
		padding-left: 3px;
		white-space: nowrap;
	}
	.market {
		flex: none;
		width: 16px;
		height: 16px;
		margin: 0 4px 0 1px;
		border-radius: 50%;
		background: #f00000;
		color: #ffff00;
		text-align: center;
		line-height: 16px;
	}
	.quote {
		display: flex;
		gap: 5px;
		color: #008000;
		font: 11px/16px 'DejaVu Sans', 'Noto Sans CJK SC', sans-serif;
	}
	.quote.up {
		flex: none;
		width: 210px;
		color: #d01028;
	}
	.unit {
		color: #600018;
		font-size: 12px;
		line-height: 1;
	}
	.scrollbar {
		display: flex;
		flex: 1;
		height: 17px;
		box-sizing: border-box;
		border-top: 1px solid #606060;
		border-left: 1px solid #606060;
	}
	.scrollbar button {
		display: flex;
		align-items: center;
		justify-content: center;
		width: 34px;
		padding-left: 8px;
	}
	.scrollbar .next {
		width: 60px;
		padding: 0 18px 0 0;
	}
	.scrollbar svg {
		width: 10px;
		height: 10px;
		fill: none;
		stroke: #404040;
		stroke-width: 2;
	}
	.thumb {
		flex: 1;
		background: #cdcdcd;
	}
	.receive {
		display: flex;
		align-items: center;
		flex: 0 0 152px;
		box-sizing: border-box;
		gap: 4px;
		padding-left: 4px;
		font-size: 13px;
	}
	.receive svg {
		width: 12px;
		height: 16px;
	}

	.status {
		display: flex;
		align-items: center;
		height: 22px;
		box-sizing: border-box;
		border-top: 1px solid #fff;
		border-bottom: 1px solid #a0a0a0;
	}
	.status .grip {
		height: 16px;
	}
	.status p {
		display: flex;
		flex: 1;
		gap: 4px;
		margin: 0 2px 0 5px;
		border: 1px solid;
		border-color: #a0a0a0 #fff #fff #a0a0a0;
		line-height: 17px;
		white-space: nowrap;
	}
</style>
